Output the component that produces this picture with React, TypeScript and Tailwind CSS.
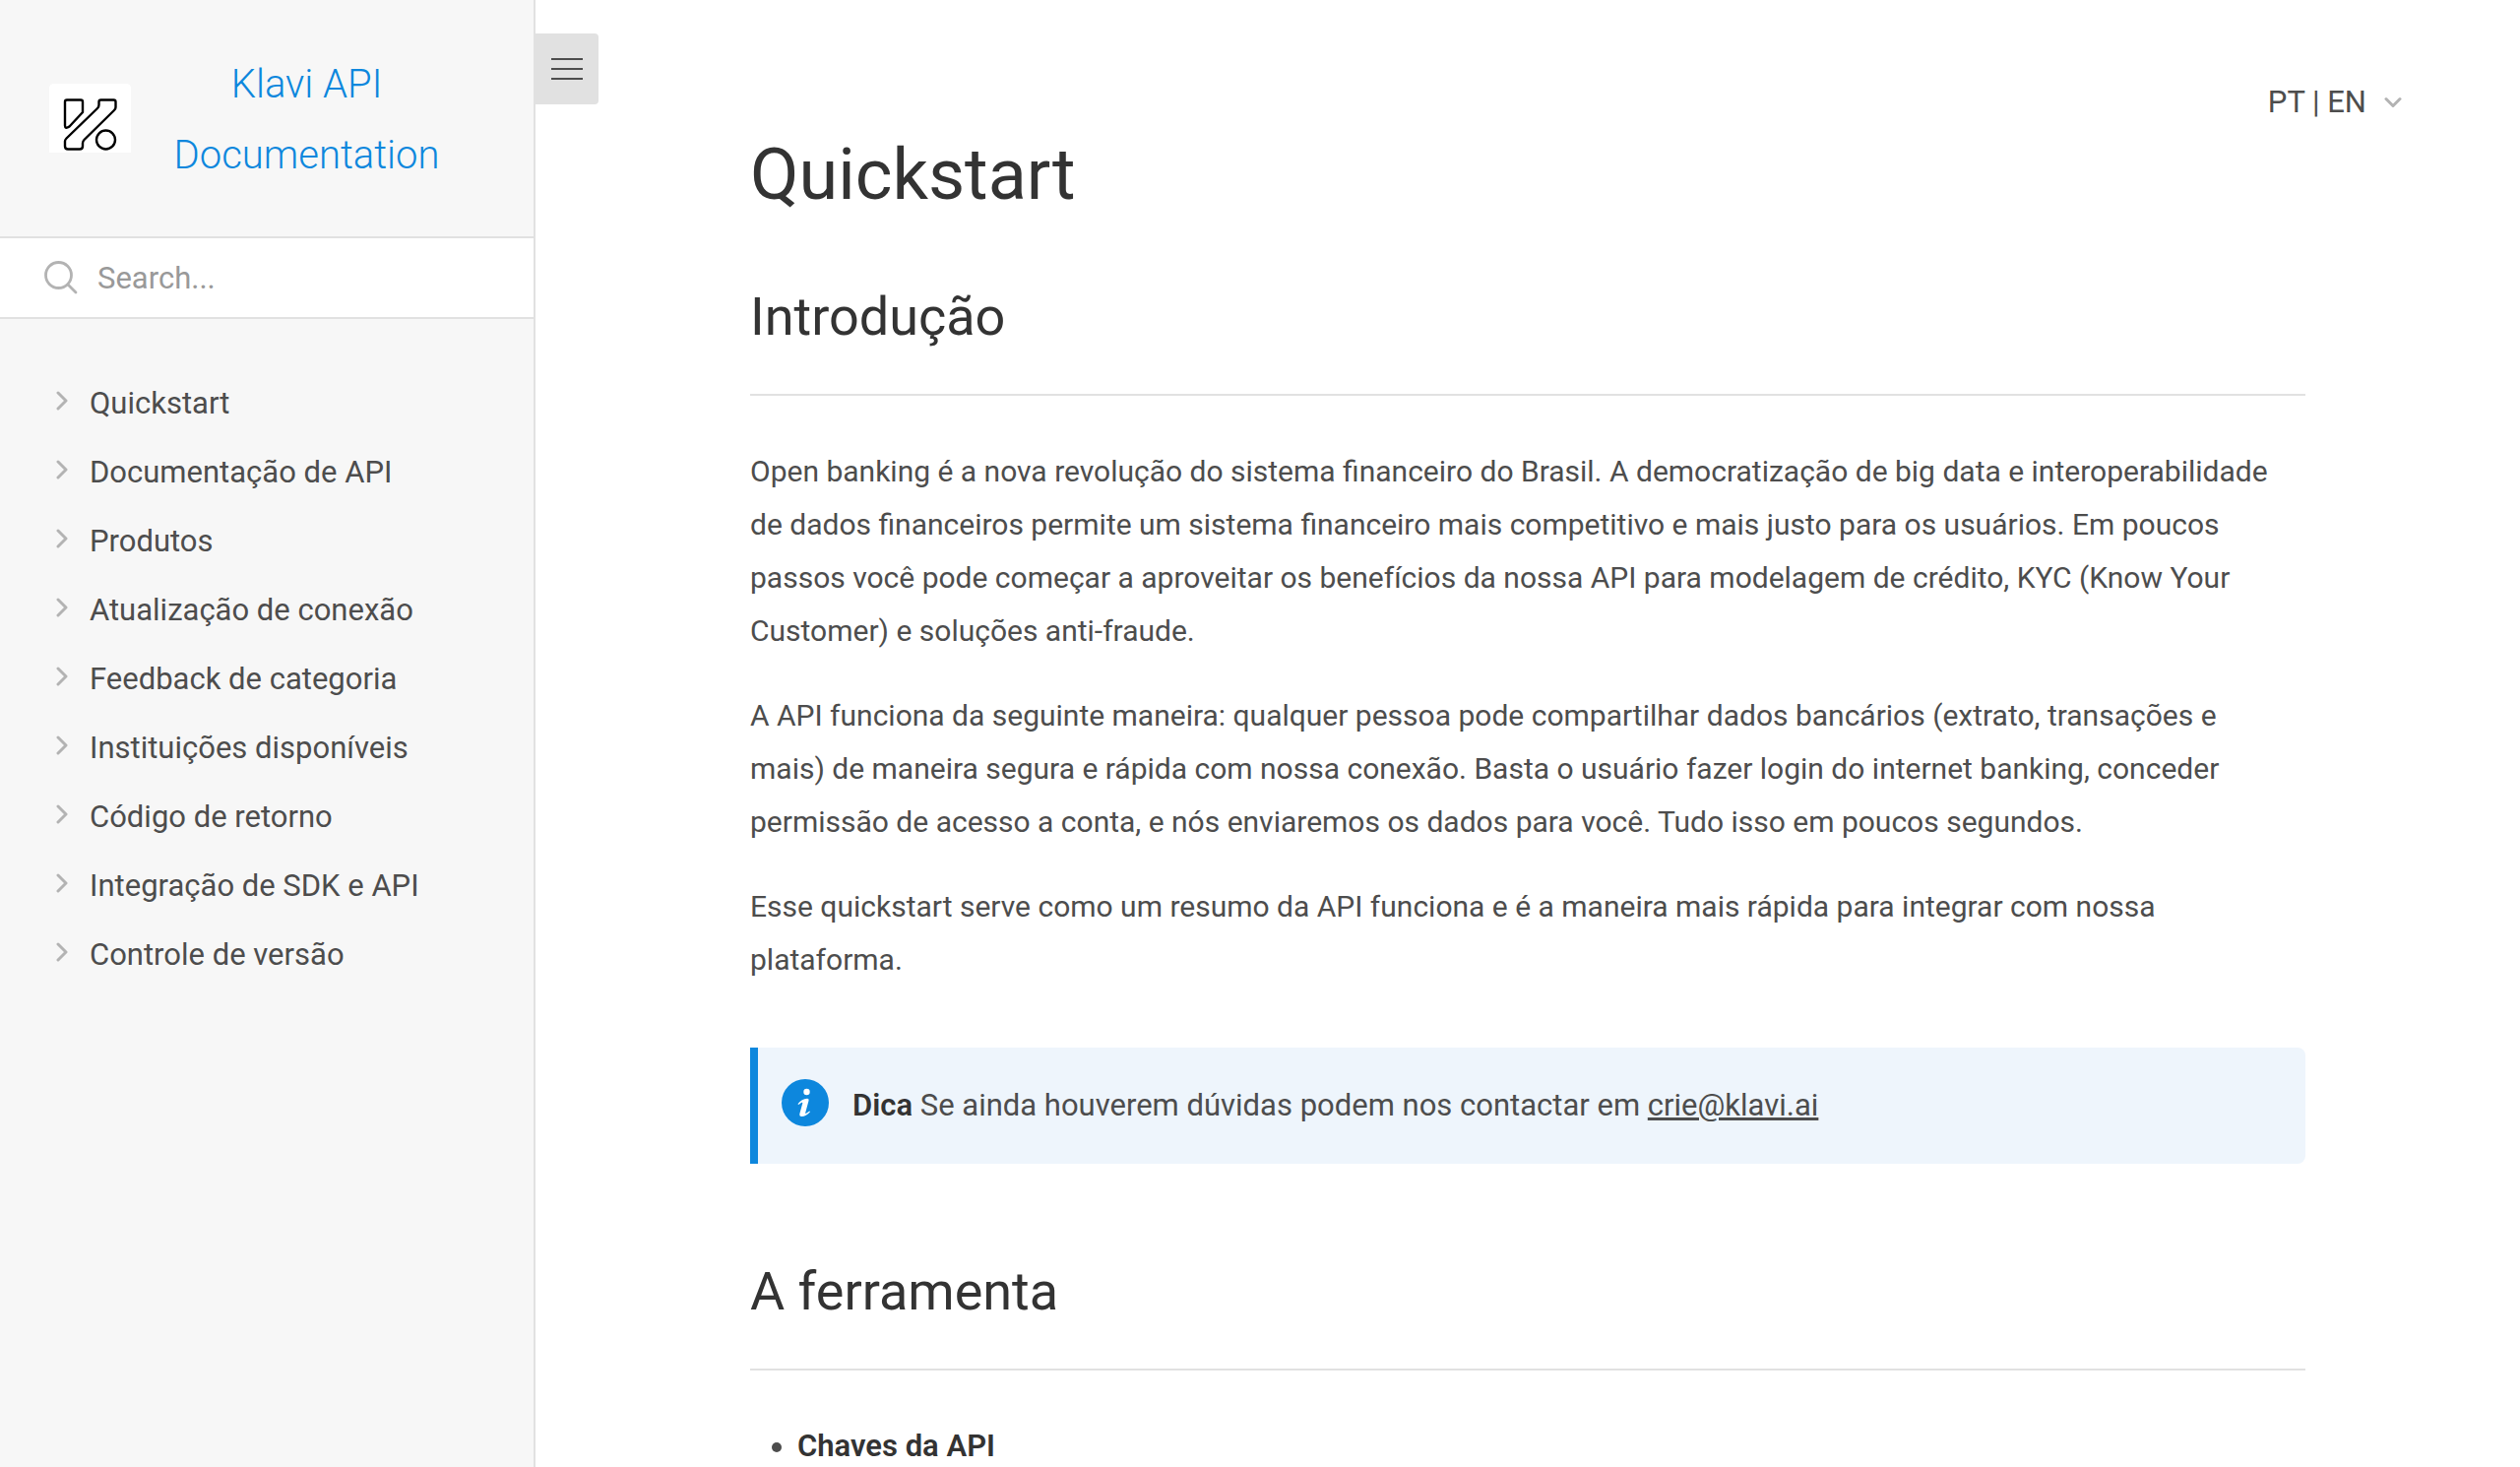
import React from "react";

const NAV_ITEMS = [
  "Quickstart",
  "Documentação de API",
  "Produtos",
  "Atualização de conexão",
  "Feedback de categoria",
  "Instituições disponíveis",
  "Código de retorno",
  "Integração de SDK e API",
  "Controle de versão",
];

function KlaviLogo() {
  return (
    <svg className="h-[70px] w-[83px] shrink-0" viewBox="0 0 83 70" fill="none" aria-hidden="true">
      <path d="M0 70V5Q0 0 5 0H78Q83 0 83 5V70Z" fill="#fff" />
      <g stroke="#000" strokeWidth="2.400" strokeLinejoin="round">
        <path d="M18 16.500H32Q34 16.500 34 18.500V29L20.500 43.500Q16 46.500 16 42.500V18.500Q16 16.500 18 16.500Z" />
        <path d="M52.500 16.500H65.500Q67.500 16.500 67.500 18.500V24Q67.500 25.500 66 27L35.500 57Q34 58.500 34 60.500V63.500Q34 66.500 31 66.500H19Q16 66.500 16 63.500V58.500Q16 57 17.500 55.500L49 25Q50.500 23.500 50.500 21.500V18.500Q50.500 16.500 52.500 16.500Z" />
        <circle cx="57.500" cy="57" r="9.500" />
      </g>
    </svg>
  );
}

function ChevronRight() {
  return (
    <svg className="mb-1.5 h-5 w-3 shrink-0" viewBox="0 0 12 20" fill="none" stroke="#b3b3b3" strokeWidth="3" strokeLinecap="round" strokeLinejoin="round" aria-hidden="true">
      <path d="M2 2L10 10L2 18" />
    </svg>
  );
}

function ChevronDown() {
  return (
    <svg className="h-3 w-[18px] shrink-0" viewBox="0 0 18 12" fill="none" stroke="#b3b3b3" strokeWidth="3" strokeLinecap="round" strokeLinejoin="round" aria-hidden="true">
      <path d="M2 2.500L9 9.500L16 2.500" />
    </svg>
  );
}

function SearchIcon() {
  return (
    <svg className="h-[34px] w-[34px] shrink-0" viewBox="0 0 34 34" fill="none" stroke="#b3b3b3" strokeWidth="2.800" strokeLinecap="round" aria-hidden="true">
      <circle cx="14.500" cy="14.500" r="13" />
      <path d="M24 24L32 32" />
    </svg>
  );
}

function InfoIcon() {
  return (
    <svg className="h-12 w-12 shrink-0" viewBox="0 0 48 48" aria-hidden="true">
      <circle cx="24" cy="24" r="24" fill="#0d87dd" />
      <circle cx="25.500" cy="13" r="3.200" fill="#fff" />
      <path d="M16.500 25.200C19 22 22.500 20 26 19.800C27.300 19.800 27.800 20.600 27.500 22L24.200 34.200C24 35.200 24.700 35.200 25.500 34.600L28.300 32.400L29 33.300C26.500 36.200 23.300 38 20.300 38C18.600 38 18 36.800 18.400 35L21.300 24.600C21.500 23.600 20.800 23.500 20 24L17.200 26Z" fill="#fff" />
    </svg>
  );
}

function SectionHeading({ children }: { children: React.ReactNode }) {
  return (
    <h2 className="border-b-2 border-[#e1e1e1] pb-[38px] text-[54px] leading-[80px] text-[#333]">
      {children}
    </h2>
  );
}

export default function App() {
  return (
    <div className="flex h-screen overflow-hidden bg-white font-['Roboto',sans-serif] text-[31px] leading-[54px] text-[#4d4d4d]">
      <aside className="flex w-[544px] shrink-0 flex-col border-r-2 border-[#e1e1e1] bg-[#f7f7f7]">
        <a href="#inicio" className="flex h-[240px] items-center pl-[50px] pr-20 text-[#0d87dd]">
          <KlaviLogo />
          <span className="flex-1 pl-7 pt-1 text-center text-[40px] font-light leading-[72px]">
            Klavi API Documentation
          </span>
        </a>
        <label className="flex h-[84px] items-center gap-5 border-y-2 border-[#e1e1e1] bg-white px-[45px]">
          <SearchIcon />
          <input
            type="search"
            aria-label="Search"
            placeholder="Search..."
            className="w-full min-w-0 bg-transparent pt-0.5 outline-none placeholder:text-[#999]"
          />
        </label>
        <nav className="pt-[51px]">
          <ul>
            {NAV_ITEMS.map((item) => (
              <li key={item}>
                <a href="#secao" className="flex h-[70px] items-center gap-[22px] pl-[57px]">
                  <ChevronRight />
                  {item}
                </a>
              </li>
            ))}
          </ul>
        </nav>
      </aside>

      <main className="min-w-0 flex-1">
        <header className="flex h-[130px] items-start justify-between pr-[120px] pt-[34px]">
          <button
            type="button"
            aria-label="Menu"
            className="flex h-[72px] w-16 flex-col items-center justify-center gap-2 rounded-r bg-[#e1e1e1]"
          >
            <span className="h-0.5 w-8 bg-[#4d4d4d]" />
            <span className="h-0.5 w-8 bg-[#4d4d4d]" />
            <span className="h-0.5 w-8 bg-[#4d4d4d]" />
          </button>
          <button type="button" className="mt-[43px] flex items-center gap-[18px]">
            PT | EN
            <ChevronDown />
          </button>
        </header>

        <article className="mx-auto max-w-[1580px]">
          <h1 className="text-[72px] leading-[96px] text-[#333]">Quickstart</h1>
          <div className="pt-14">
            <SectionHeading>Introdução</SectionHeading>
          </div>
          <div className="flex flex-col gap-8 pt-[50px] text-[30px]">
            <p>
              Open banking é a nova revolução do sistema financeiro do Brasil. A democratização de big data e
              interoperabilidade de dados financeiros permite um sistema financeiro mais competitivo e mais justo para
              os usuários. Em poucos passos você pode começar a aproveitar os benefícios da nossa API para modelagem de
              crédito, KYC (Know Your Customer) e soluções anti-fraude.
            </p>
            <p>
              A API funciona da seguinte maneira: qualquer pessoa pode compartilhar dados bancários (extrato, transações
              e mais)&nbsp;de maneira segura e rápida com nossa conexão. Basta o usuário fazer login do internet banking,
              conceder permissão&nbsp;de acesso a conta, e nós enviaremos os dados para você. Tudo isso em poucos
              segundos.
            </p>
            <p>
              Esse quickstart serve como um resumo da API funciona e é a maneira mais rápida para integrar com nossa
              plataforma.
            </p>
          </div>
          <aside className="mt-[62px] flex items-start gap-6 rounded-r-lg border-l-8 border-[#0d87dd] bg-[#eef5fc] px-6 py-8">
            <InfoIcon />
            <p>
              <strong className="font-semibold text-[#333]">Dica</strong> Se ainda houverem dúvidas podem nos contactar
              em{" "}
              <a href="mailto:crie@klavi.ai" className="underline">
                crie@klavi.ai
              </a>
            </p>
          </aside>
          <div className="pt-[90px]">
            <SectionHeading>A ferramenta</SectionHeading>
          </div>
          <ul className="list-disc pl-12 pt-[50px]">
            <li>
              <strong className="font-semibold text-[#333]">Chaves da API</strong>
            </li>
          </ul>
        </article>
      </main>
    </div>
  );
}
